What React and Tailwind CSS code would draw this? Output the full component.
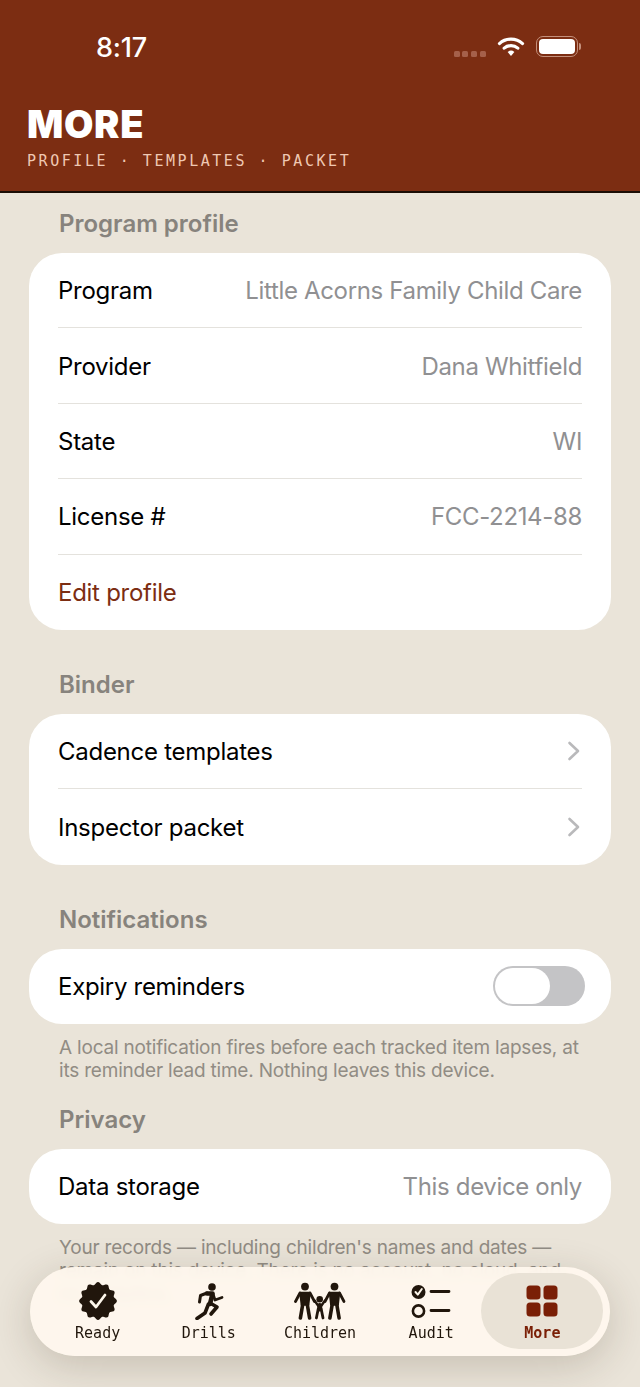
import React from "react";

const sans = "font-['Inter','Noto_Sans',sans-serif]";
const mono = "font-['DejaVu_Sans_Mono','Liberation_Mono',monospace]";

function Label({ children }) {
  return <div className="h-[30px] pl-[30px] text-[24px] leading-[30px] font-semibold text-[#87837d]">{children}</div>;
}

function Row({ label, value, chevron, last, accent }) {
  return (
    <div className="flex h-[75.4px] items-center pr-[29px]">
      <div className={`flex h-full flex-1 items-center justify-between ${last ? "" : "border-b border-[#e4e2dd]"}`}>
        <span className={`mt-[2px] text-[24px] tracking-[-0.27px] ${accent ? "text-[#7c2d12]" : "text-black"}`}>{label}</span>
        {value && <span className="mt-[2px] text-[24px] tracking-[-0.34px] text-[#909092]">{value}</span>}
        {chevron && (
          <svg width="14" height="22" viewBox="0 0 14 22" fill="none" className="mr-[1px]">
            <path d="M2.5 3L11 11L2.5 19" stroke="#b9b9bb" strokeWidth="2.6" strokeLinecap="round" strokeLinejoin="round" />
          </svg>
        )}
      </div>
    </div>
  );
}

function Card({ children }) {
  return <div className="mt-[14px] rounded-[33px] bg-white pl-[29px]">{children}</div>;
}

function Note({ children }) {
  return <p className="mt-[12px] pl-[30px] pr-[26px] text-[19px] leading-[23px] tracking-[-0.2px] text-[#918c84]">{children}</p>;
}

function Badge() {
  const pts = [];
  const n = 12;
  for (let i = 0; i < 120; i++) {
    const t = (Math.PI * 2 * i) / 120;
    const r = 17.6 + 1.3 * Math.cos(n * t);
    const a = t - Math.PI / 2;
    pts.push(`${(19 + r * Math.cos(a)).toFixed(2)},${(19 + r * Math.sin(a)).toFixed(2)}`);
  }
  return (
    <svg width="38" height="38" viewBox="0 0 38 38">
      <polygon points={pts.join(" ")} fill="#21160c" />
      <path d="M12 19.5L17 25L26 13" fill="none" stroke="#fdf6ea" strokeWidth="2.8" strokeLinecap="round" strokeLinejoin="round" />
    </svg>
  );
}

function Runner() {
  return (
    <svg width="30" height="38" viewBox="0 0 30 38" fill="none" stroke="#21160c" strokeLinecap="round" strokeLinejoin="round">
      <circle cx="18" cy="5" r="3.8" fill="#21160c" stroke="none" />
      <path d="M13 11L6.5 13.5L5.5 20" strokeWidth="3" />
      <path d="M13 11.5L18.5 11.5L16 22" strokeWidth="4.6" />
      <path d="M16 21L23 25L17 32" strokeWidth="3.6" />
      <path d="M19 12L21 18L28 15.5" strokeWidth="2.8" />
      <path d="M14.5 22L11 31L3 36.5" strokeWidth="3.6" />
    </svg>
  );
}

function Adult({ x }) {
  return (
    <g>
      <circle cx={x} cy="4.6" r="3.9" fill="#21160c" stroke="none" />
      <path d={`M${x - 5} 10.5H${x + 5}L${x + 3.6} 23H${x - 3.6}Z`} fill="#21160c" strokeWidth="1.6" />
      <path d={`M${x - 5} 11L${x - 9.5} 19.5 M${x + 5} 11L${x + 9.5} 19.5`} strokeWidth="2.8" />
      <path d={`M${x - 2.2} 22L${x - 4.6} 36 M${x + 2.2} 22L${x + 4.6} 36`} strokeWidth="3.6" />
    </g>
  );
}

function Family() {
  return (
    <svg width="52" height="38" viewBox="0 0 52 38" fill="none" stroke="#21160c" strokeLinecap="round" strokeLinejoin="round">
      <Adult x={11} />
      <Adult x={40.5} />
      <circle cx="25.7" cy="17.3" r="3.3" fill="#21160c" stroke="none" />
      <path d="M20.5 18.5L24 23.5H27.5L31 18.5" strokeWidth="2.4" />
      <path d="M25.7 23.5V27" strokeWidth="5" />
      <path d="M24.2 27L22.4 36 M27.2 27L29 36" strokeWidth="2.8" />
    </svg>
  );
}

function Checklist() {
  return (
    <svg width="40" height="38" viewBox="0 0 40 38" fill="none" strokeLinecap="round" strokeLinejoin="round">
      <circle cx="7.5" cy="10" r="7" fill="#21160c" />
      <path d="M4.5 10L6.8 12.6L10.8 7" stroke="#fdf6ea" strokeWidth="2" />
      <circle cx="7.5" cy="29" r="5.6" stroke="#21160c" strokeWidth="2.6" />
      <path d="M20 9.5H38M20 28.5H38" stroke="#21160c" strokeWidth="2.8" />
    </svg>
  );
}

function Grid4() {
  return (
    <svg width="32" height="32" viewBox="0 0 32 32" fill="#7a1f06">
      <rect x="0.5" y="0.5" width="14" height="14" rx="3.5" />
      <rect x="17.5" y="0.5" width="14" height="14" rx="3.5" />
      <rect x="0.5" y="17.5" width="14" height="14" rx="3.5" />
      <rect x="17.5" y="17.5" width="14" height="14" rx="3.5" />
    </svg>
  );
}

function Tab({ icon, label, active }) {
  return (
    <div className="relative flex h-full w-[111.2px] flex-col items-center pt-[15px]">
      {active && <div className="absolute left-[-5.5px] right-[-5.5px] top-[6px] h-[76px] rounded-full bg-[#e9e2d6]" />}
      <div className="relative flex h-[38px] items-center justify-center">{icon}</div>
      <div className={`relative mt-[3px] text-[15px] leading-[20px] ${mono} ${active ? "font-bold text-[#7a1f06]" : "text-[#21160c]"}`}>{label}</div>
    </div>
  );
}

export default function App() {
  return (
    <div className={`relative flex h-[1387px] w-[640px] flex-col overflow-hidden bg-[#eae4d9] ${sans}`}>
      <header className="h-[193px] shrink-0 border-b-2 border-[#1b0d06] bg-[#7c2d12] text-white">
        <div className="flex h-[94px] items-start justify-between pl-[96px] pr-[59px] pt-[32px]">
          <span className="text-[27px] leading-[32px] font-medium tracking-[-0.2px]">8:17</span>
          <div className="flex items-center gap-[11px] pt-[4px]">
            <div className="mt-[15px] flex gap-[2.8px]">
              <span className="h-[6px] w-[6px] rounded-[1.5px] bg-[#a5604a]" />
              <span className="h-[6px] w-[6px] rounded-[1.5px] bg-[#a5604a]" />
              <span className="h-[6px] w-[6px] rounded-[1.5px] bg-[#a5604a]" />
              <span className="h-[6px] w-[6px] rounded-[1.5px] bg-[#a5604a]" />
            </div>
            <svg width="28" height="21" viewBox="0 0 26 20" fill="none">
              <path d="M2 7.2C8.2 1.6 17.8 1.6 24 7.2" stroke="white" strokeWidth="3" strokeLinecap="round" />
              <path d="M6.5 11.6C10.2 8.4 15.8 8.4 19.5 11.6" stroke="white" strokeWidth="3" strokeLinecap="round" />
              <path d="M9.8 15.2C11.8 13.4 14.2 13.4 16.2 15.2L13 19Z" fill="white" />
            </svg>
            <div className="flex items-center gap-[1px]">
              <div className="h-[21px] w-[42px] rounded-[7px] border-[1.5px] border-[#c4907c] p-[2px]">
                <div className="h-full w-full rounded-[4px] bg-white" />
              </div>
              <div className="h-[7px] w-[2px] rounded-r-[2px] bg-[#c4907c]" />
            </div>
          </div>
        </div>
        <div className="mt-[10px] pl-[27px] text-[38px] leading-[40px] font-black tracking-[0.65px]">MORE</div>
        <div className={`mt-[8px] pl-[27px] text-[15px] leading-[18px] tracking-[2.55px] text-[#efc8b2] ${mono}`}>PROFILE · TEMPLATES · PACKET</div>
      </header>

      <main className="flex-1 px-[29px] pt-[16px]">
        <Label>Program profile</Label>
        <Card>
          <Row label="Program" value="Little Acorns Family Child Care" />
          <Row label="Provider" value="Dana Whitfield" />
          <Row label="State" value="WI" />
          <Row label="License #" value="FCC-2214-88" />
          <Row label="Edit profile" accent last />
        </Card>

        <div className="mt-[40px]"><Label>Binder</Label></div>
        <Card>
          <Row label="Cadence templates" chevron />
          <Row label="Inspector packet" chevron last />
        </Card>

        <div className="mt-[40px]"><Label>Notifications</Label></div>
        <Card>
          <div className="flex h-[75px] items-center justify-between pr-[26px]">
            <span className="mt-[2px] text-[24px] tracking-[-0.3px] text-black">Expiry reminders</span>
            <div className="h-[40px] w-[92px] rounded-full bg-[#c4c4c6] p-[2px]">
              <div className="h-[36px] w-[55px] rounded-full bg-white" />
            </div>
          </div>
        </Card>
        <Note>A local notification fires before each tracked item lapses, at its reminder lead time. Nothing leaves this device.</Note>

        <div className="mt-[23px]"><Label>Privacy</Label></div>
        <Card>
          <Row label="Data storage" value="This device only" last />
        </Card>
        <Note>Your records — including children's names and dates — remain on this device. There is no account, no cloud, and no analytics.</Note>
      </main>

      <nav className="absolute left-[30px] top-[1267px] flex h-[89px] w-[580px] justify-center rounded-full bg-[#fff8ee]/93 shadow-[0_10px_40px_rgba(60,45,25,0.2)] backdrop-blur-[5px]">
        <Tab icon={<Badge />} label="Ready" />
        <Tab icon={<Runner />} label="Drills" />
        <Tab icon={<Family />} label="Children" />
        <Tab icon={<Checklist />} label="Audit" />
        <Tab icon={<Grid4 />} label="More" active />
      </nav>
    </div>
  );
}
